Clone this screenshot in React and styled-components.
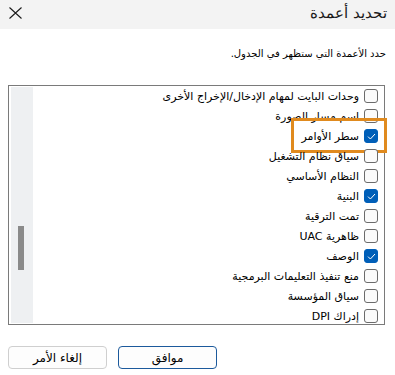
import React from "react";
import styled, { createGlobalStyle } from "styled-components";

const Global = createGlobalStyle`
  html, body { margin: 0; padding: 0; background: #ffffff; }
  body { width: 395px; height: 375px; overflow: hidden; font-family: "DejaVu Sans", "Noto Sans", sans-serif; }
`;

const Dialog = styled.div`
  direction: rtl;
  width: 395px;
  height: 375px;
  background: #ffffff;
  display: flex;
  flex-direction: column;
`;

const TitleBar = styled.div`
  height: 29px;
  background: #f3f3f3;
  display: flex;
  align-items: center;
  justify-content: space-between;
  padding: 0 8px 3px 9px;
  box-sizing: border-box;
`;

const Title = styled.div`
  font-size: 15px;
  color: #1a1a1a;
  font-weight: 300;
`;

const Close = styled.div`
  width: 13px;
  height: 12px;
  display: flex;
  cursor: pointer;
`;

const Body = styled.div`
  padding: 18px 10px 0 8px;
  display: flex;
  flex-direction: column;
`;

const Hint = styled.div`
  font-size: 10px;
  color: #000;
  line-height: 14px;
  height: 14px;
  margin-right: -1px;
`;

const ListBox = styled.div`
  margin-top: 24px;
  height: 240px;
  border: 1px solid #7a7a7a;
  box-sizing: border-box;
  display: flex;
`;

const Rows = styled.div`
  flex: 1;
  display: flex;
  flex-direction: column;
  overflow-x: visible;
  overflow-y: clip;
`;

const Track = styled.div`
  width: 22px;
  margin: 1px 2px;
  background: #eef0f2;
  position: relative;
`;

const Thumb = styled.div`
  position: absolute;
  left: 7px;
  top: 139px;
  width: 6px;
  height: 44px;
  background: #8a8a8a;
`;

const Row = styled.div`
  position: relative;
  height: 20px;
  flex-shrink: 0;
  display: flex;
  align-items: center;
  gap: 5px;
  padding-right: 6px;
`;

const Box = styled.div`
  width: 14px;
  height: 14px;
  box-sizing: border-box;
  border-radius: 3px;
  border: 1px solid ${({ $checked }) => ($checked ? "#005fb8" : "#6b6b6b")};
  background: ${({ $checked }) => ($checked ? "#005fb8" : "#fbfbfb")};
  display: flex;
  align-items: center;
  justify-content: center;
  flex-shrink: 0;
`;

const Label = styled.span`
  font-size: 11px;
  color: #000;
  white-space: nowrap;
`;

const Highlight = styled.div`
  position: absolute;
  top: -8px;
  bottom: -7px;
  right: -3px;
  width: 96px;
  border: 3px solid #e08a1e;
  box-sizing: border-box;
  pointer-events: none;
`;

const Buttons = styled.div`
  display: flex;
  justify-content: flex-end;
  gap: 11px;
  padding: 21px 0 0 8px;
`;

const Button = styled.button`
  width: 99px;
  height: 23px;
  box-sizing: border-box;
  border-radius: 4px;
  border: 1px solid ${({ $primary }) => ($primary ? "#1c5a9c" : "#cfcfcf")};
  background: #fdfdfd;
  font-family: "DejaVu Sans", sans-serif;
  font-size: 12px;
  color: #000;
  padding: 0;
`;

const items = [
  { label: "وحدات البايت لمهام الإدخال/الإخراج الأخرى" },
  { label: "اسم مسار الصورة" },
  { label: "سطر الأوامر", checked: true, marked: true },
  { label: "سياق نظام التشغيل" },
  { label: "النظام الأساسي" },
  { label: "البنية", checked: true },
  { label: "تمت الترقية" },
  { label: "ظاهرية UAC" },
  { label: "الوصف", checked: true },
  { label: "منع تنفيذ التعليمات البرمجية" },
  { label: "سياق المؤسسة" },
  { label: "إدراك DPI" },
];

const Check = () => (
  <svg width="9" height="7" viewBox="0 0 9 7">
    <path d="M1 3.6 L3.4 6 L8 1" fill="none" stroke="#fff" strokeWidth="1" />
  </svg>
);

export default function App() {
  return (
    <>
      <Global />
      <Dialog>
        <TitleBar>
          <Title>تحديد أعمدة</Title>
          <Close>
            <svg width="13" height="12" viewBox="0 0 13 12">
              <path d="M0.5 0.5 L12.5 11.5 M12.5 0.5 L0.5 11.5" stroke="#1a1a1a" strokeWidth="1.1" />
            </svg>
          </Close>
        </TitleBar>
        <Body>
          <Hint>حدد الأعمدة التي ستظهر في الجدول.</Hint>
          <ListBox>
            <Rows>
              {items.map((it) => (
                <Row key={it.label}>
                  <Box $checked={it.checked}>{it.checked && <Check />}</Box>
                  <Label>{it.label}</Label>
                  {it.marked && <Highlight />}
                </Row>
              ))}
            </Rows>
            <Track>
              <Thumb />
            </Track>
          </ListBox>
        </Body>
        <Buttons>
          <Button $primary>موافق</Button>
          <Button>إلغاء الأمر</Button>
        </Buttons>
      </Dialog>
    </>
  );
}
